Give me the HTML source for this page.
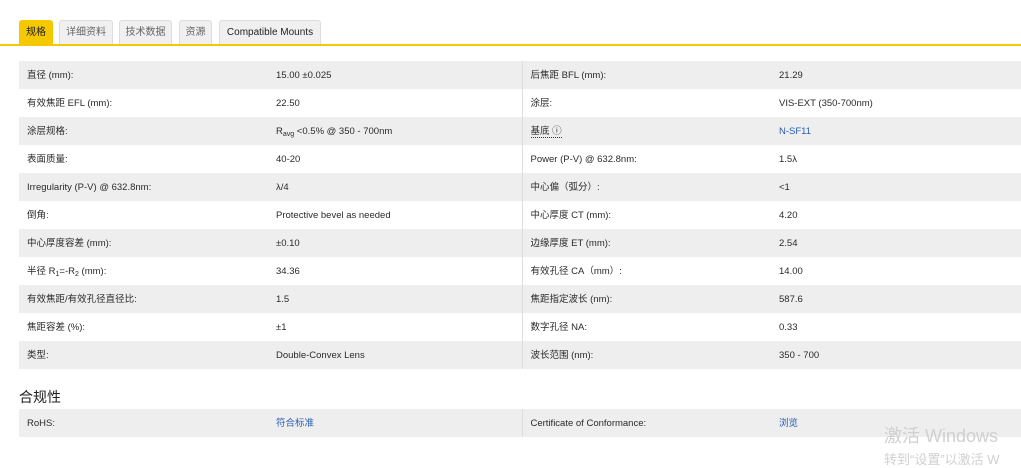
<!DOCTYPE html>
<html><head><meta charset="utf-8"><style>
*{margin:0;padding:0;box-sizing:border-box}
body{width:1021px;height:460px;background:#fff;font-family:"Liberation Sans","Noto Sans CJK SC",sans-serif;font-size:10px;color:#333;position:relative;overflow:hidden}
.tabs{position:absolute;top:20px;left:19px;height:24px}
.tab{position:absolute;top:0;height:24px;background:#f0f0f0;border:1px solid #ddd;border-bottom:none;border-radius:3px 3px 0 0;font-size:10px;line-height:23px;text-align:center;color:#666}
.tab.a{background:#f5c800;border-color:#f5c800;color:#222}
.line{position:absolute;top:44px;left:0;width:1021px;height:2px;background:#f5c800}
table{position:absolute;left:19px;border-collapse:collapse;width:1002px}
td{height:28px;padding:2px 8px 0;font-size:9.5px;vertical-align:middle;color:#2a2a2a;line-height:12px}
sub{font-size:7px;line-height:0;vertical-align:-2px}
tr:nth-child(odd) td{background:#eeeeee}
td.c1{width:249px}td.c2{width:254px;border-right:1px solid #ddd}td.c3{width:249px}
a{color:#2a5db0;text-decoration:none}
h3{position:absolute;top:387px;left:19px;font-size:14px;font-weight:normal;color:#222}
.wm{position:absolute;left:884px;top:422px;font-size:18px;color:#d0d0d0}
.wm2{position:absolute;left:884px;top:449px;font-size:13px;color:#d0d0d0}
</style></head><body>
<div class="tabs">
<div class="tab a" style="left:0;width:34px">规格</div>
<div class="tab" style="left:40px;width:54px">详细资料</div>
<div class="tab" style="left:100px;width:53px">技术数据</div>
<div class="tab" style="left:160px;width:33px">资源</div>
<div class="tab" style="left:200px;width:102px;color:#222">Compatible Mounts</div>
</div>
<div class="line"></div>
<table style="top:61px">
<tr><td class="c1">直径 (mm):</td><td class="c2">15.00 ±0.025</td><td class="c3">后焦距 BFL (mm):</td><td>21.29</td></tr>
<tr><td class="c1">有效焦距 EFL (mm):</td><td class="c2">22.50</td><td class="c3">涂层:</td><td>VIS-EXT (350-700nm)</td></tr>
<tr><td class="c1">涂层规格:</td><td class="c2">R<sub>avg</sub> &lt;0.5% @ 350 - 700nm</td><td class="c3"><span style="border-bottom:1px dotted #333">基底 ⓘ</span></td><td><a>N-SF11</a></td></tr>
<tr><td class="c1">表面质量:</td><td class="c2">40-20</td><td class="c3">Power (P-V) @ 632.8nm:</td><td>1.5λ</td></tr>
<tr><td class="c1">Irregularity (P-V) @ 632.8nm:</td><td class="c2">λ/4</td><td class="c3">中心偏（弧分）:</td><td>&lt;1</td></tr>
<tr><td class="c1">倒角:</td><td class="c2">Protective bevel as needed</td><td class="c3">中心厚度 CT (mm):</td><td>4.20</td></tr>
<tr><td class="c1">中心厚度容差 (mm):</td><td class="c2">±0.10</td><td class="c3">边缘厚度 ET (mm):</td><td>2.54</td></tr>
<tr><td class="c1">半径 R<sub>1</sub>=-R<sub>2</sub> (mm):</td><td class="c2">34.36</td><td class="c3">有效孔径 CA（mm）:</td><td>14.00</td></tr>
<tr><td class="c1">有效焦距/有效孔径直径比:</td><td class="c2">1.5</td><td class="c3">焦距指定波长 (nm):</td><td>587.6</td></tr>
<tr><td class="c1">焦距容差 (%):</td><td class="c2">±1</td><td class="c3">数字孔径 NA:</td><td>0.33</td></tr>
<tr><td class="c1">类型:</td><td class="c2">Double-Convex Lens</td><td class="c3">波长范围 (nm):</td><td>350 - 700</td></tr>
</table>
<h3>合规性</h3>
<table style="top:409px">
<tr><td class="c1">RoHS:</td><td class="c2"><a>符合标准</a></td><td class="c3">Certificate of Conformance:</td><td><a>浏览</a></td></tr>
</table>
<div class="wm">激活 Windows</div>
<div class="wm2">转到“设置”以激活 W</div>
</body></html>
